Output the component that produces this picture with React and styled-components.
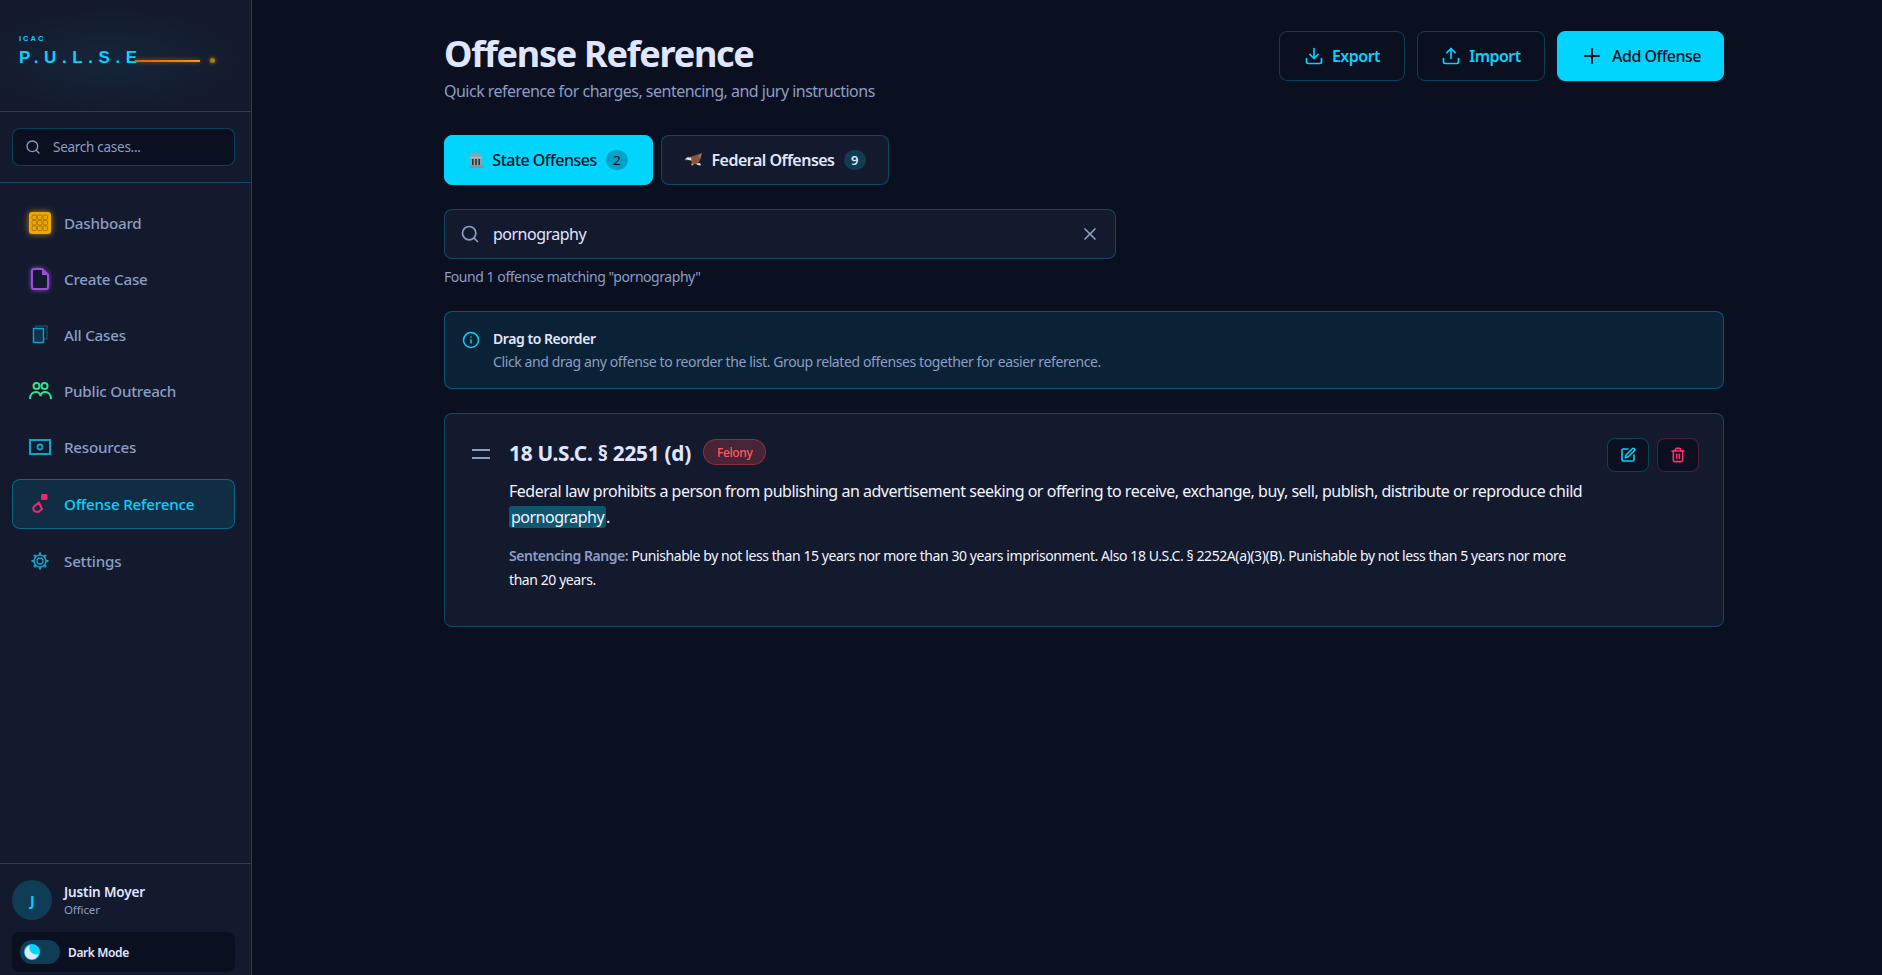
import React from "react";
import styled, { createGlobalStyle } from "styled-components";
import { Search, Download, Upload, Plus, X, Info, SquarePen, Trash2 } from "lucide-react";

const FONT = `"Noto Sans", "Open Sans", sans-serif`;
const CYAN = "#00d4ff";
const LINE = "rgba(0, 212, 255, 0.25)";
const TEXT = "#e0e6ff";
const MUTED = "#8b9dc3";
const PANEL = "#141a2e";
const DEEP = "#0b1021";

const Global = createGlobalStyle`
  * { box-sizing: border-box; letter-spacing: -0.032em; }
  html, body { margin: 0; height: 100%; overflow: hidden; background: ${DEEP}; }
  body { font-family: ${FONT}; color: ${TEXT}; }
`;

const Shell = styled.div`
  display: flex;
  height: 975px;
  width: 1882px;
`;

const Sidebar = styled.aside`
  width: 252px;
  flex: none;
  display: flex;
  flex-direction: column;
  background: ${PANEL};
  border-right: 1px solid ${LINE};
`;

const LogoBlock = styled.div`
  position: relative;
  height: 112px;
  padding: 34px 19px 0;
  border-bottom: 1px solid ${LINE};
  background: radial-gradient(ellipse 130px 50px at 110px 60px, #15253a 0%, transparent 100%);
`;
const LogoSmall = styled.div`
  font: 700 7.5px/9px "Liberation Sans", sans-serif;
  letter-spacing: 2px;
  color: ${CYAN};
`;
const LogoBig = styled.div`
  margin-top: 5px;
  font: 700 17px/20px "Liberation Sans", sans-serif;
  letter-spacing: 5.6px;
  color: ${CYAN};
  white-space: nowrap;
`;
const PulseLine = styled.div`
  position: absolute;
  left: 135px;
  top: 60px;
  width: 65px;
  height: 2px;
  background: linear-gradient(90deg, #e8590c, #f59e0b);
  box-shadow: 0 0 4px rgba(245, 158, 11, 0.6);
`;
const PulseDot = styled.div`
  position: absolute;
  left: 210px;
  top: 58px;
  width: 5px;
  height: 5px;
  border-radius: 50%;
  background: #a87a12;
  box-shadow: 0 0 4px rgba(245, 158, 11, 0.7);
`;

const SideSearchWrap = styled.div`
  padding: 16px 16px 16px 12px;
  border-bottom: 1px solid ${LINE};
  height: 71px;
`;
const SideSearch = styled.div`
  display: flex;
  align-items: center;
  gap: 12px;
  height: 38px;
  padding: 0 12px;
  background: ${DEEP};
  border: 1px solid ${LINE};
  border-radius: 8px;
  font-size: 13.5px;
  letter-spacing: -0.02em;
  color: ${MUTED};
  & > svg { flex: none; }
`;

const Nav = styled.nav`
  flex: 1;
  display: flex;
  flex-direction: column;
  padding: 15px 16px 0 12px;
  gap: 7px;
`;
const NavItem = styled.div`
  display: flex;
  align-items: center;
  gap: 13px;
  height: ${(p) => (p.$active ? 50 : 49)}px;
  margin-top: ${(p) => (p.$active ? 1 : 0)}px;
  padding: 0 16px;
  border-radius: 8px;
  border: 1px solid ${(p) => (p.$active ? "rgba(0,212,255,0.35)" : "transparent")};
  background: ${(p) => (p.$active ? "#102d44" : "transparent")};
  color: ${(p) => (p.$active ? CYAN : MUTED)};
  font-size: 15.2px;
  font-weight: 500;
  letter-spacing: -0.015em;
  & > svg { flex: none; }
`;

const Footer = styled.div`
  height: 112px;
  padding: 16px 16px 0 12px;
  border-top: 1px solid ${LINE};
`;
const UserRow = styled.div`
  display: flex;
  align-items: center;
  gap: 12px;
`;
const Avatar = styled.div`
  width: 40px;
  height: 40px;
  border-radius: 50%;
  background: #0f3d55;
  color: ${CYAN};
  display: flex;
  align-items: center;
  justify-content: center;
  font-size: 14px;
  font-weight: 700;
`;
const UserInfo = styled.div`
  padding-top: 2px;
`;
const UserName = styled.div`
  font-size: 13.5px;
  font-weight: 600;
  line-height: 18px;
  letter-spacing: -0.01em;
  color: ${TEXT};
`;
const UserRole = styled.div`
  font-size: 11.5px;
  line-height: 18px;
  letter-spacing: -0.01em;
  color: ${MUTED};
`;
const ModeBox = styled.div`
  display: flex;
  align-items: center;
  gap: 8px;
  height: 40px;
  margin-top: 12px;
  padding: 0 8px;
  border-radius: 8px;
  background: ${DEEP};
  font-size: 12px;
  font-weight: 600;
`;
const Toggle = styled.div`
  width: 40px;
  height: 24px;
  padding: 4px;
  border-radius: 12px;
  background: #0f3d55;
`;
const Knob = styled.div`
  width: 16px;
  height: 16px;
  border-radius: 50%;
  background: ${CYAN};
  display: flex;
  align-items: center;
  justify-content: center;
`;

const Main = styled.main`
  flex: 1;
  padding: 0 0 0 192px;
`;
const Content = styled.div`
  width: 1280px;
`;
const Header = styled.header`
  display: flex;
  justify-content: space-between;
  align-items: flex-start;
  padding-top: 31px;
`;
const Title = styled.h1`
  margin: 0;
  font-size: 36px;
  font-weight: 700;
  line-height: 46px;
  letter-spacing: -0.035em;
  color: ${TEXT};
`;
const Subtitle = styled.p`
  margin: 2px 0 0;
  font-size: 16px;
  line-height: 24px;
  color: ${MUTED};
`;
const Actions = styled.div`
  display: flex;
  gap: 12px;
`;
const Button = styled.button`
  display: flex;
  align-items: center;
  justify-content: center;
  gap: 8px;
  height: 50px;
  width: ${(p) => p.$w}px;
  border-radius: 8px;
  font-family: ${FONT};
  font-size: 16px;
  font-weight: ${(p) => (p.$primary ? 500 : 600)};
  color: ${(p) => (p.$primary ? DEEP : CYAN)};
  background: ${(p) => (p.$primary ? CYAN : "transparent")};
  border: 1px solid ${(p) => (p.$primary ? CYAN : LINE)};
`;

const Tabs = styled.div`
  display: flex;
  gap: 8px;
  margin-top: 32px;
`;
const Tab = styled.div`
  display: flex;
  align-items: center;
  justify-content: center;
  gap: 9px;
  height: 50px;
  width: ${(p) => p.$w}px;
  border-radius: 8px;
  font-size: 16px;
  font-weight: ${(p) => (p.$active ? 500 : 600)};
  color: ${(p) => (p.$active ? DEEP : TEXT)};
  background: ${(p) => (p.$active ? CYAN : PANEL)};
  border: 1px solid ${(p) => (p.$active ? CYAN : LINE)};
`;
const Count = styled.span`
  width: 22px;
  height: 20px;
  border-radius: 10px;
  display: flex;
  align-items: center;
  justify-content: center;
  font-size: 13px;
  font-weight: ${(p) => (p.$active ? 400 : 600)};
  background: ${(p) => (p.$active ? "#00a3c8" : "#0f3d55")};
`;

const SearchBar = styled.div`
  display: flex;
  align-items: center;
  gap: 13px;
  width: 672px;
  height: 50px;
  margin-top: 24px;
  padding: 0 15px 0 15px;
  background: ${PANEL};
  border: 1px solid ${LINE};
  border-radius: 8px;
  font-size: 16px;
  & > span { flex: 1; }
`;
const Found = styled.div`
  margin-top: 8px;
  font-size: 14px;
  line-height: 20px;
  color: ${MUTED};
`;
const InfoBox = styled.div`
  display: flex;
  gap: 13px;
  height: 78px;
  margin-top: 24px;
  padding: 16px 17px;
  background: #0b2236;
  border: 1px solid rgba(0, 212, 255, 0.3);
  border-radius: 8px;
  & > svg { flex: none; margin-top: 3px; }
`;
const InfoTitle = styled.div`
  font-size: 14px;
  line-height: 21px;
  font-weight: 600;
`;
const InfoText = styled.div`
  margin-top: 3px;
  font-size: 14px;
  line-height: 20px;
  letter-spacing: -0.028em;
  color: ${MUTED};
`;

const Card = styled.article`
  display: flex;
  height: 214px;
  margin-top: 24px;
  padding: 24px 24px 0 27px;
  background: ${PANEL};
  border: 1px solid ${LINE};
  border-radius: 8px;
`;
const Handle = styled.div`
  flex: none;
  width: 18px;
  height: 10px;
  margin: 11px 19px 0 0;
  border-top: 2px solid ${MUTED};
  border-bottom: 2px solid ${MUTED};
`;
const CardBody = styled.div`
  flex: 1;
`;
const CardHead = styled.div`
  display: flex;
  align-items: center;
  gap: 12px;
  height: 30px;
`;
const Code = styled.h3`
  margin: 0;
  font-size: 20.8px;
  font-weight: 700;
  letter-spacing: -0.012em;
  color: ${TEXT};
`;
const Badge = styled.span`
  padding: 0 13px;
  height: 26px;
  margin-top: -2px;
  display: flex;
  align-items: center;
  border-radius: 13px;
  font-size: 12px;
  font-weight: 500;
  color: #ff5a5f;
  background: rgba(255, 71, 87, 0.22);
  border: 1px solid rgba(255, 71, 87, 0.35);
`;
const Desc = styled.p`
  margin: 10px 0 0;
  width: 1090px;
  font-size: 16px;
  line-height: 26px;
  letter-spacing: -0.03em;
  color: #f1f4ff;
`;
const Mark = styled.mark`
  padding: 0 2px;
  border-radius: 3px;
  background: #0f566e;
  color: inherit;
`;
const Sentence = styled.p`
  margin: 14px 0 0;
  width: 1078px;
  font-size: 14px;
  line-height: 24px;
  letter-spacing: -0.03em;
  color: #f1f4ff;
`;
const Label = styled.strong`
  font-weight: 600;
  color: ${MUTED};
`;
const CardActions = styled.div`
  display: flex;
  gap: 8px;
  height: 34px;
`;
const IconBtn = styled.button`
  width: 42px;
  height: 34px;
  display: flex;
  align-items: center;
  justify-content: center;
  padding: 0;
  border-radius: 8px;
  background: ${DEEP};
  color: ${(p) => (p.$danger ? "#ff2d6f" : CYAN)};
  border: 1px solid ${(p) => (p.$danger ? "rgba(255,45,111,0.3)" : LINE)};
`;

const DashIcon = () => (
  <svg width="24" height="24" viewBox="0 0 24 24" style={{ filter: "drop-shadow(0 0 3px rgba(255,180,0,.7))", marginLeft: -1, marginRight: -1 }}>
    <rect x="1" y="1" width="22" height="22" rx="3" fill="#f0a800" />
    <g fill="none" stroke="#a87300" strokeWidth="1">
      {[4, 9.5, 15].map((x) => [4, 9.5, 15].map((y) => <rect key={x + "-" + y} x={x} y={y} width="4.5" height="4.5" rx="1.2" />))}
    </g>
  </svg>
);
const DocIcon = () => (
  <svg width="22" height="24" viewBox="0 0 22 24" style={{ filter: "drop-shadow(0 0 2px rgba(170,80,255,.8))" }}>
    <path d="M5 2h8l6 6v12a2 2 0 0 1-2 2H5a2 2 0 0 1-2-2V4a2 2 0 0 1 2-2z" fill="#141a2e" stroke="#9a4fd6" strokeWidth="2" />
    <path d="M13 2l6 6h-6z" fill="#9a4fd6" />
  </svg>
);
const CasesIcon = () => (
  <svg width="22" height="22" viewBox="0 0 22 22">
    <rect x="7" y="2" width="11" height="13" fill="none" stroke="#0d5a78" strokeWidth="1.2" />
    <rect x="4.5" y="4.5" width="10" height="14" fill="#13324a" stroke="#0ea5c9" strokeWidth="1.4" />
  </svg>
);
const PeopleIcon = () => (
  <svg width="23" height="18" viewBox="0 0 23 18" fill="none" stroke="#2fe28e" strokeWidth="2" style={{ marginRight: -1 }}>
    <circle cx="7.5" cy="4" r="3" />
    <circle cx="15.500" cy="4" r="3" />
    <path d="M1 17C1 12 4 10 7 10C9.500 10 11 11.500 11.500 14C12 11.500 13.500 10 16 10C19 10 22 12 22 17" />
  </svg>
);
const ResIcon = () => (
  <svg width="22" height="16" viewBox="0 0 22 16" fill="none" stroke="#0ea5c9">
    <rect x="1" y="1" width="20" height="14" strokeWidth="2" />
    <circle cx="11" cy="8" r="2.500" strokeWidth="1.800" />
  </svg>
);
const OffIcon = () => (
  <svg width="22" height="22" viewBox="0 0 22 22" fill="none">
    <rect x="12" y="1" width="6.500" height="6" rx="1.500" fill="#f0266f" />
    <path d="M10 9.500L5 13.500c-1.500 1.500-.5 4 1 5l3.500.5 3.500-3z" stroke="#f0266f" strokeWidth="2" strokeLinejoin="round" />
  </svg>
);
const GearIcon = () => (
  <svg width="22" height="22" viewBox="0 0 22 22" fill="none" stroke="#0ea5c9" strokeWidth="1.500">
    <circle cx="11" cy="11" r="6" />
    <circle cx="11" cy="11" r="3" strokeWidth="1.300" />
    {[0, 45, 90, 135, 180, 225, 270, 315].map((a) => (
      <path key={a} d="M11 2.500v2.500" strokeWidth="2.200" transform={`rotate(${a} 11 11)`} />
    ))}
  </svg>
);
const BankIcon = () => (
  <svg width="14" height="16" viewBox="0 0 14 16">
    <path d="M7 0L13 3.500V5H1V3.500z" fill="#9a9fa3" />
    <rect x="1" y="5" width="12" height="1.500" fill="#b4b8bb" />
    <rect x="1.500" y="6.500" width="11" height="7" fill="#9a9fa3" />
    <g fill="#2f3236">
      <rect x="3" y="7" width="1.600" height="6" />
      <rect x="6.200" y="7" width="1.600" height="6" />
      <rect x="9.400" y="7" width="1.600" height="6" />
    </g>
    <rect x="0" y="13.500" width="14" height="2.500" fill="#8a8f93" />
  </svg>
);
const EagleIcon = () => (
  <svg width="18" height="14" viewBox="0 0 18 14">
    <path d="M5 4L11 2L17 0L15.500 6L14 9L11 11H7L6 7z" fill="#8a5540" />
    <path d="M13 3L16.500 .5L15 5.500z" fill="#a9735a" />
    <path d="M0 6L2.500 4.300L6 4.500L6.500 7.500L3 7z" fill="#e8e3dc" />
    <path d="M0 6L1 7.500L2 6.800z" fill="#e0b040" />
    <path d="M11 10.500L15 10L16 12.500L12.500 12z" fill="#e8e3dc" />
    <path d="M6 10.500L9 11L7 13z" fill="#d9a82e" />
  </svg>
);
const MoonGlyph = () => (
  <svg width="16" height="16" viewBox="0 0 16 16">
    <path d="M6 1.500A7 7 0 1 0 14.500 10 6.500 6.500 0 0 1 6 1.500z" fill="#e0e6ff" />
  </svg>
);

const items = [
  ["Dashboard", DashIcon],
  ["Create Case", DocIcon],
  ["All Cases", CasesIcon],
  ["Public Outreach", PeopleIcon],
  ["Resources", ResIcon],
  ["Offense Reference", OffIcon, true],
  ["Settings", GearIcon],
];

export default function App() {
  return (
    <>
      <Global />
      <Shell>
        <Sidebar>
          <LogoBlock>
            <LogoSmall>ICAC</LogoSmall>
            <LogoBig>P.U.L.S.E</LogoBig>
            <PulseLine />
            <PulseDot />
          </LogoBlock>
          <SideSearchWrap>
            <SideSearch>
              <Search size={16} color={MUTED} />
              Search cases...
            </SideSearch>
          </SideSearchWrap>
          <Nav>
            {items.map(([label, Icon, active]) => (
              <NavItem key={label} $active={active}>
                <Icon />
                {label}
              </NavItem>
            ))}
          </Nav>
          <Footer>
            <UserRow>
              <Avatar>J</Avatar>
              <UserInfo>
                <UserName>Justin Moyer</UserName>
                <UserRole>Officer</UserRole>
              </UserInfo>
            </UserRow>
            <ModeBox>
              <Toggle>
                <Knob><MoonGlyph /></Knob>
              </Toggle>
              Dark Mode
            </ModeBox>
          </Footer>
        </Sidebar>
        <Main>
          <Content>
            <Header>
              <div>
                <Title>Offense Reference</Title>
                <Subtitle>Quick reference for charges, sentencing, and jury instructions</Subtitle>
              </div>
              <Actions>
                <Button $w={126}><Download size={20} />Export</Button>
                <Button $w={128}><Upload size={20} />Import</Button>
                <Button $w={167} $primary><Plus size={24} />Add Offense</Button>
              </Actions>
            </Header>
            <Tabs>
              <Tab $w={209} $active><BankIcon />State Offenses<Count $active>2</Count></Tab>
              <Tab $w={228}><EagleIcon />Federal Offenses<Count>9</Count></Tab>
            </Tabs>
            <SearchBar>
              <Search size={20} color={MUTED} />
              <span>pornography</span>
              <X size={20} color={MUTED} />
            </SearchBar>
            <Found>Found 1 offense matching "pornography"</Found>
            <InfoBox>
              <Info size={18} color={CYAN} />
              <div>
                <InfoTitle>Drag to Reorder</InfoTitle>
                <InfoText>Click and drag any offense to reorder the list. Group related offenses together for easier reference.</InfoText>
              </div>
            </InfoBox>
            <Card>
              <Handle />
              <CardBody>
                <CardHead>
                  <Code>18 U.S.C. § 2251 (d)</Code>
                  <Badge>Felony</Badge>
                </CardHead>
                <Desc>
                  Federal law prohibits a person from publishing an advertisement seeking or offering to receive, exchange, buy, sell, publish, distribute or reproduce child <Mark>pornography</Mark>.
                </Desc>
                <Sentence>
                  <Label>Sentencing Range:</Label> Punishable by not less than 15 years nor more than 30 years imprisonment. Also 18 U.S.C. § 2252A(a)(3)(B). Punishable by not less than 5 years nor more than 20 years.
                </Sentence>
              </CardBody>
              <CardActions>
                <IconBtn><SquarePen size={16} strokeWidth={2.4} /></IconBtn>
                <IconBtn $danger><Trash2 size={16} strokeWidth={2.4} /></IconBtn>
              </CardActions>
            </Card>
          </Content>
        </Main>
      </Shell>
    </>
  );
}
